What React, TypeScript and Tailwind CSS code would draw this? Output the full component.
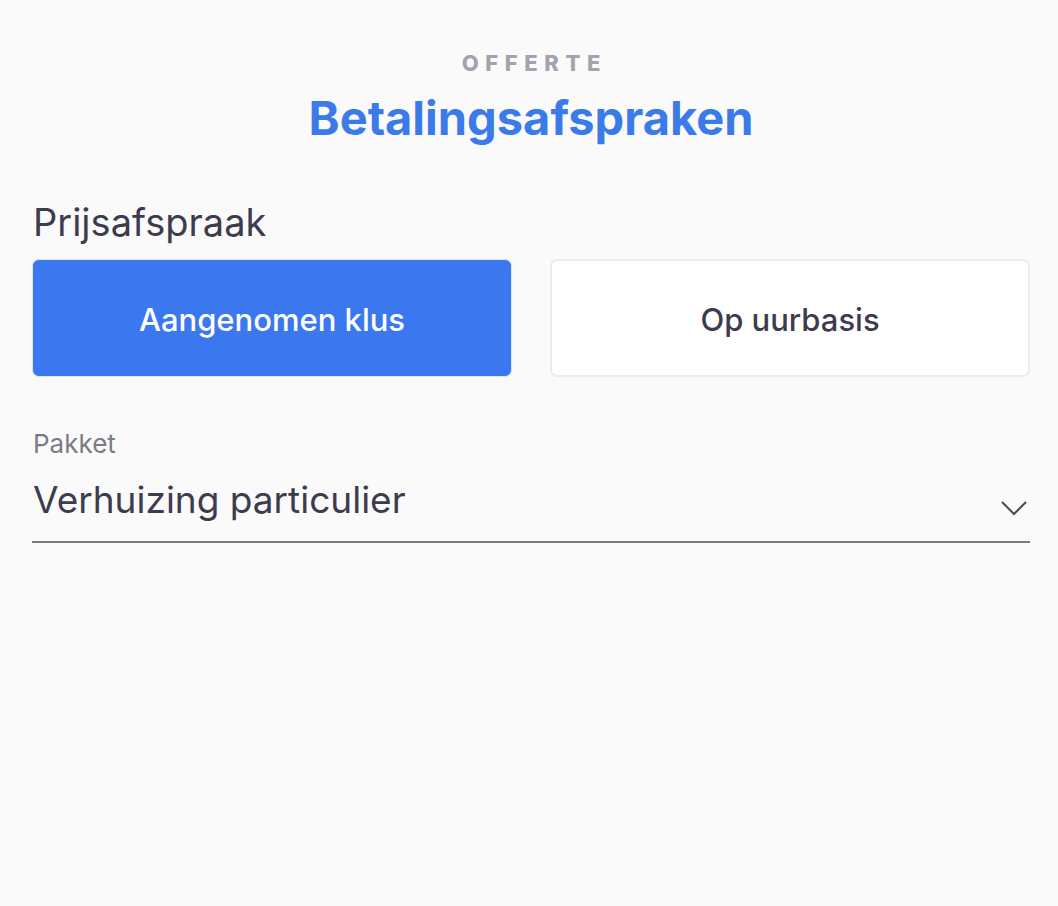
export default function App() {
  return (
    <div
      className="min-h-[906px] bg-[#fafafa] pl-[32px] pr-[28px] pt-[50px]"
      style={{ fontFamily: "Inter, 'Noto Sans', sans-serif" }}
    >
      <div className="pl-[0.3em] text-center text-[22px] font-extrabold leading-[26px] tracking-[0.3em] text-[#a3a2ad]">
        OFFERTE
      </div>
      <h1 className="mt-[12px] text-center text-[47px] font-bold leading-[60px] text-[#3b7be9]">
        Betalingsafspraken
      </h1>

      <div className="mt-[52px] pl-[1px] text-[38px] leading-[44px] text-[#3d3c4f]">
        Prijsafspraak
      </div>
      <div className="mt-[15px] grid grid-cols-2 gap-[38px]">
        <button className="flex h-[118px] items-center justify-center rounded-[7px] border border-[#dbe6fb] bg-[#3b78f0] pt-[5px] text-[31px] font-medium text-white">
          Aangenomen klus
        </button>
        <button className="flex h-[118px] items-center justify-center rounded-[7px] border-2 border-[#ececee] bg-white pt-[5px] text-[31px] font-medium text-[#3d3c4f]">
          Op uurbasis
        </button>
      </div>

      <div className="mt-[52px] pl-[1px] text-[26px] leading-[30px] text-[#7b7a85]">
        Pakket
      </div>
      <div className="flex items-center justify-between border-b-2 border-[#7b7a85] pb-[19px] pt-[19px]">
        <span className="pl-[1px] text-[37px] leading-[44px] text-[#3d3c4f]">
          Verhuizing particulier
        </span>
        <svg
          width="28"
          height="16"
          viewBox="0 0 28 16"
          fill="none"
          stroke="#4a4957"
          strokeWidth="2"
          className="mr-[2px] mt-[16px]"
        >
          <path d="M2 2l12 12L26 2" />
        </svg>
      </div>
    </div>
  );
}
